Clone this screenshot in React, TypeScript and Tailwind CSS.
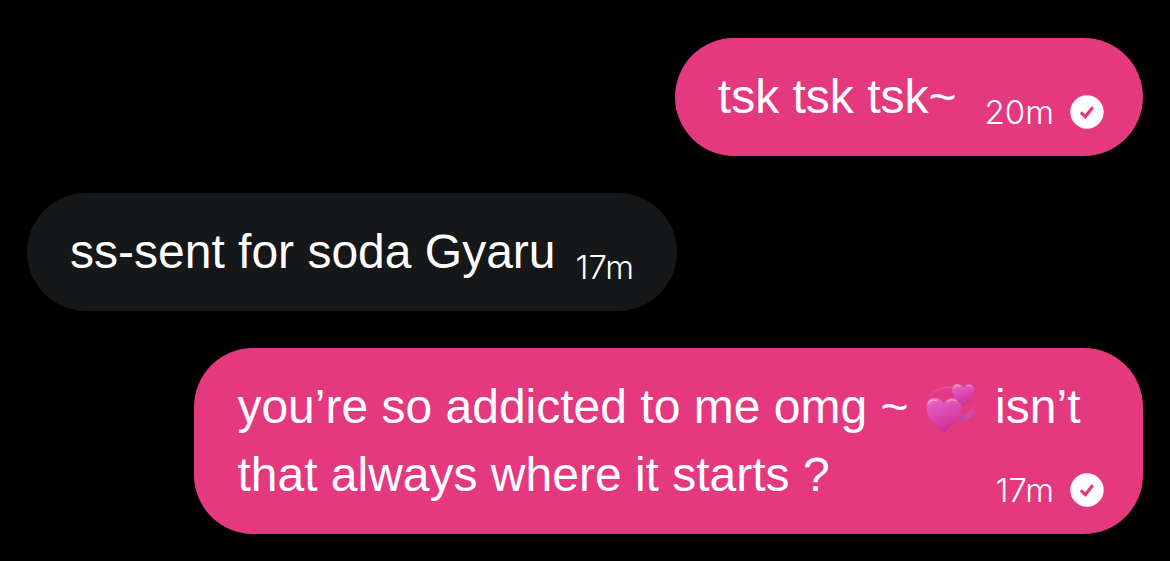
import type { ReactNode } from "react";

function SentBadge() {
  return (
    <svg viewBox="0 0 34 34" className="size-[34px] shrink-0" role="img" aria-label="Sent">
      <circle cx="17" cy="17" r="16.7" fill="#fff" />
      <path d="M10.8 17.4 L15.4 21.6 L22.8 12.2" fill="none" stroke="#e4397f" strokeWidth="3.2" />
    </svg>
  );
}

function RevolvingHearts() {
  return (
    <svg viewBox="65 36 180 156" className="inline-block h-[52px] w-[60px] align-[-11px]" role="img" aria-label="Revolving hearts">
      <defs>
        <linearGradient id="heart" x1="0" y1="0" x2="0.35" y2="1">
          <stop offset="0" stopColor="#f291cd" />
          <stop offset="0.2" stopColor="#e460bb" />
          <stop offset="0.55" stopColor="#dc48b4" />
          <stop offset="1" stopColor="#cf2f92" />
        </linearGradient>
        <linearGradient id="sweep" x1="0" y1="1" x2="1" y2="0">
          <stop offset="0" stopColor="#b93fa9" />
          <stop offset="0.5" stopColor="#c950b4" />
          <stop offset="1" stopColor="#e33b89" />
        </linearGradient>
      </defs>
      <path d="M82 84 C98 58 130 48 160 53 L166 66 C140 56 110 62 90 82 Z" fill="#d9428f" />
      <path d="M84 79 C100 58 130 49 157 53" fill="none" stroke="#e05aa6" strokeWidth="3" />
      <path d="M225 98 C229 126 209 153 172 157 L178 138 C200 136 215 119 225 98 Z" fill="url(#sweep)" />
      <path d="M130 190 C119 176 78 149 78 113 C78 94 88 84 102 84 C115 84 125 90 130 100 C135 90 145 84 157 84 C172 84 182 95 182 113 C182 149 142 176 130 190 Z" fill="url(#heart)" />
      <path d="M191 109 C183 100 155 85 155 61 C155 48 163 42 171 42 C181 42 187 46 190 53 C193 46 199 42 207 42 C216 42 222 48 222 60 C222 82 197 99 191 109 Z" fill="url(#heart)" />
      <path d="M85 99 C89 91 98 89 109 92 M141 95 C147 89 158 88 168 93" fill="none" stroke="#fac4e5" strokeWidth="4" strokeLinecap="round" opacity="0.6" />
      <path d="M161 52 C165 46 173 46 179 49 M199 48 C204 45 211 46 215 51" fill="none" stroke="#fac4e5" strokeWidth="3" strokeLinecap="round" opacity="0.55" />
    </svg>
  );
}

function Meta({ time, sent = false }: { time: string; sent?: boolean }) {
  return (
    <span className="flex h-[38px] shrink-0 items-center gap-4 font-['Inter',sans-serif] text-[33px] leading-[38px] font-light">
      <time>{time}</time>
      {sent && <SentBadge />}
    </span>
  );
}

function Bubble({ own = false, children }: { own?: boolean; children: ReactNode }) {
  return (
    <li
      className={
        own
          ? "max-w-[85%] self-end rounded-[59px] bg-[#e4397f] py-[25px] pr-[39px] pl-[43px]"
          : "max-w-[85%] self-start rounded-[59px] bg-[#161718] py-[25px] pr-[43px] pl-[43px]"
      }
    >
      {children}
    </li>
  );
}

export default function App() {
  return (
    <main className="min-h-screen bg-black px-[27px] pt-[38px] pb-[26px] font-['Liberation_Sans',Arial,sans-serif] text-[48px] leading-[68px] text-white">
      <ul className="flex flex-col gap-[37px]">
        <Bubble own>
          <div className="flex items-end gap-7">
            <p>tsk tsk tsk~</p>
            <Meta time="20m" sent />
          </div>
        </Bubble>
        <Bubble>
          <div className="flex items-end gap-5">
            <p>ss-sent for soda Gyaru</p>
            <Meta time="17m" />
          </div>
        </Bubble>
        <Bubble own>
          <p>
            you’re so addicted to me omg ~ <RevolvingHearts /> isn’t that always where it starts ?
            <span className="float-right pt-[30px]">
              <Meta time="17m" sent />
            </span>
          </p>
        </Bubble>
      </ul>
    </main>
  );
}
